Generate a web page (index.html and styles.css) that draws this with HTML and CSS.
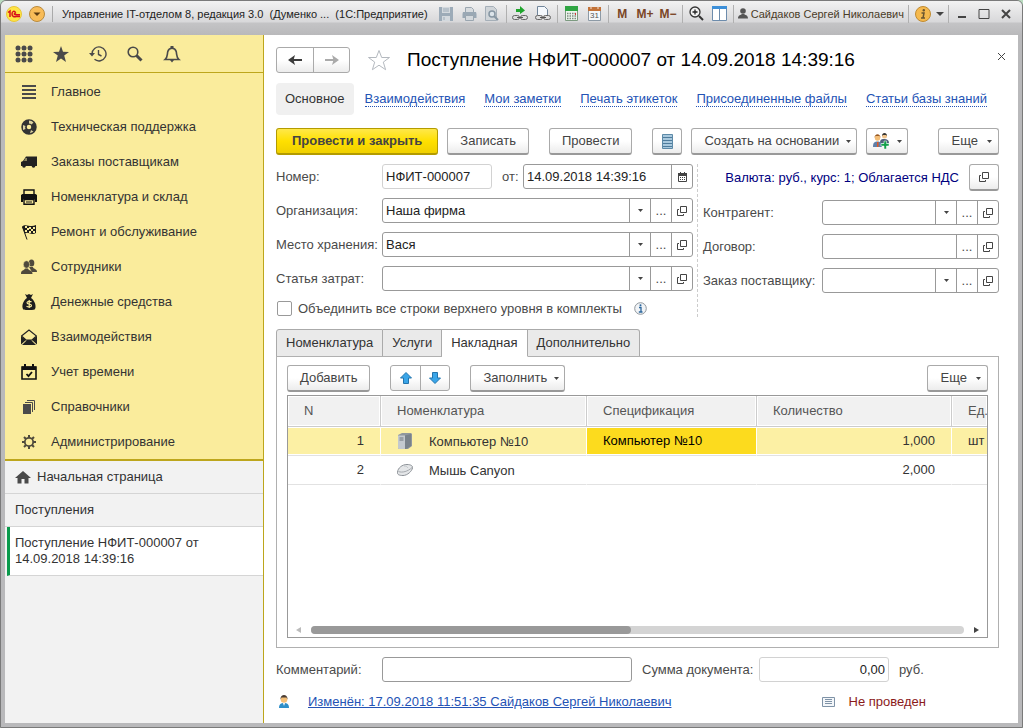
FILE: index.html
```
<!DOCTYPE html>
<html lang="ru">
<head>
    <meta charset="UTF-8">
    <meta name="viewport" content="width=device-width, initial-scale=1.0">
    <title>Поступление НФИТ-000007 от 14.09.2018 14:39:16</title>
    <link rel="stylesheet" href="styles.css">
</head>
<body>
<svg class="sprite" aria-hidden="true">
    <symbol id="i-caret" viewBox="0 0 5 3"><path d="M0 0h5L2.5 3z" fill="#444"/></symbol>
    <symbol id="i-open" viewBox="0 0 10 10"><path d="M3.500.5h6v6h-6zM2 3.500H.5v6h6V8" fill="none" stroke="#444"/></symbol>
</svg>
<div class="window">
    <header class="titlebar">
        <svg class="logo" width="16" height="16" viewBox="0 0 16 16"><circle cx="8" cy="8" r="7.500" fill="#ffe544" stroke="#e8c63a"/><path d="M2 6.500L4 5v6M9.500 6.500C8.500 4.500 6 5 6 8s2.500 3 4 2.500h4M10 7.500c-1-1-2 0-1.500 1 .5.5 1 .2 5.500.2" fill="none" stroke="#d8121c" stroke-width="1.500"/></svg>
        <button class="round" type="button" aria-label="Меню"><svg width="16" height="16" viewBox="0 0 16 16"><circle cx="8" cy="8" r="7.500" fill="#f8bc58" stroke="#b98a3c"/><path d="M4.500 6.500h7L8 10z" fill="#5b3b12"/></svg></button>
        <div class="caption"><span>Управление IT-отделом 8, редакция 3.0&nbsp; (Думенко ...&nbsp; (1С:Предприятие)</span></div>
        <div class="tools">
            <button type="button" aria-label="Сохранить"><svg width="14" height="14" viewBox="0 0 14 14"><path d="M0 0h14v14H0z" fill="#9cabb8"/><path d="M3 0h8v6H3zM3 9h8v5H3z" fill="#d3d9de"/><path d="M4 2h6M4 4h6M5 10v3" stroke="#9cabb8"/></svg></button>
            <button type="button" aria-label="Печать"><svg width="15" height="14" viewBox="0 0 15 14"><path d="M3.500 5V.5h6l2 2V5" fill="#d8dcdf" stroke="#9aa6b0"/><path d="M1 5h13l.5 2v4H.5V7z" fill="#9aa8b4"/><path d="M3.500 8.500h8v5h-8z" fill="#d3d8dc" stroke="#9aa6b0"/></svg></button>
            <button type="button" aria-label="Просмотр"><svg width="14" height="15" viewBox="0 0 14 15"><path d="M.5.5h8l3 3v11H.5z" fill="#d0d5d9" stroke="#a5afb8"/><circle cx="7" cy="8" r="3" fill="#dce4ea" stroke="#8696a3" stroke-width="1.500"/><path d="M9 10l4 4" stroke="#8696a3" stroke-width="2"/></svg></button>
        </div>
        <div class="tools">
            <button type="button" aria-label="Перейти по ссылке"><svg width="16" height="15" viewBox="0 0 16 15"><path d="M4 3h4V0l5 4.500L8 8V6H4z" fill="#1fa52c"/><rect x=".5" y="9.500" width="7" height="4" rx="2" fill="#ddd" stroke="#666"/><rect x="8.500" y="9.500" width="7" height="4" rx="2" fill="#ddd" stroke="#666"/><path d="M5 11.500h6" stroke="#555"/></svg></button>
            <button type="button" aria-label="Получить ссылку"><svg width="16" height="15" viewBox="0 0 16 15"><path d="M2.500 9V.5h7l3 3V9" fill="#f4f8fc" stroke="#71869b"/><rect x=".5" y="9.500" width="7" height="4" rx="2" fill="#ddd" stroke="#666"/><rect x="8.500" y="9.500" width="7" height="4" rx="2" fill="#ddd" stroke="#666"/><path d="M5 11.500h6" stroke="#555"/></svg></button>
        </div>
        <div class="tools">
            <button type="button" aria-label="Калькулятор"><svg width="13" height="15" viewBox="0 0 13 15"><path d="M.5.5h12v14H.5z" fill="#eef6ee" stroke="#7c9a80"/><path d="M0 0h13v5H0z" fill="#2fa543"/><path d="M2 7.500h9M2 10h9M2 12.500h9" stroke="#7d8a80" stroke-width="1.500" stroke-dasharray="1.500 1"/><path d="M10.500 7v2" stroke="#d33"/></svg></button>
            <button type="button" aria-label="Календарь"><svg width="13" height="15" viewBox="0 0 13 15"><path d="M.5 1.500h12v13H.5z" fill="#f5f7f9" stroke="#8d9aa6"/><path d="M0 1h13v4H0z" fill="#c27238"/><path d="M3 0v3M10 0v3" stroke="#f6e4d5"/><text x="2" y="12" class="cal-day">31</text></svg></button>
        </div>
        <div class="tools memory">
            <button type="button">M</button>
            <button type="button">M+</button>
            <button type="button">M−</button>
        </div>
        <div class="tools">
            <button type="button" aria-label="Масштаб"><svg width="15" height="15" viewBox="0 0 15 15"><circle cx="6" cy="6" r="5" fill="#f2f2f2" stroke="#333" stroke-width="1.300"/><path d="M3.500 6h5M6 3.500v5" stroke="#222" stroke-width="1.300"/><path d="M10 10l4 4" stroke="#333" stroke-width="2"/></svg></button>
            <button type="button" aria-label="Панели"><svg width="15" height="15" viewBox="0 0 15 15"><path d="M.5.5h14v14H.5z" fill="#fff" stroke="#6d8cac"/><path d="M0 0h15v3H0z" fill="#3c8fd8"/><path d="M7.500 3v11" stroke="#6d8cac"/></svg></button>
        </div>
        <div class="tools user"><svg width="10" height="11" viewBox="0 0 10 11"><circle cx="5" cy="3" r="2.800" fill="#555"/><path d="M0 10.500C0 7 3 7 4 6h2c1 1 4 1 4 4.500z" fill="#555"/></svg><span>Сайдаков Сергей Николаевич</span></div>
        <div class="tools info">
            <button type="button" aria-label="О программе"><svg width="16" height="16" viewBox="0 0 16 16"><circle cx="8" cy="8" r="7.500" fill="#f5b94e" stroke="#c08b31"/><path d="M6.500 7H9l-1 5h2M6 12h3" fill="none" stroke="#6a5530" stroke-width="1.500"/><circle cx="8.800" cy="4.300" r="1.200" fill="#6a5530"/></svg></button>
            <svg width="8" height="4" viewBox="0 0 8 4"><path d="M0 0h8L4 4z" fill="#444"/></svg>
        </div>
        <div class="winbtns">
            <button type="button" aria-label="Свернуть"><svg width="12" height="10" viewBox="0 0 12 10"><path d="M2 8h8" stroke="#444" stroke-width="2"/></svg></button>
            <button type="button" aria-label="Развернуть"><svg width="12" height="10" viewBox="0 0 12 10"><path d="M1 .5h10v9H1z" fill="none" stroke="#444"/></svg></button>
            <button type="button" aria-label="Закрыть"><svg width="12" height="10" viewBox="0 0 12 10"><path d="M2 1l8 8M10 1L2 9" stroke="#444" stroke-width="2"/></svg></button>
        </div>
    </header>

    <div class="workspace">
        <aside class="sidebar">
            <div class="quick">
                <button type="button" aria-label="Разделы"><svg width="18" height="18" viewBox="0 0 18 18" fill="#4a4a4a"><circle cx="3" cy="3" r="2.500"/><circle cx="9" cy="3" r="2.500"/><circle cx="15" cy="3" r="2.500"/><circle cx="3" cy="9" r="2.500"/><circle cx="9" cy="9" r="2.500"/><circle cx="15" cy="9" r="2.500"/><circle cx="3" cy="15" r="2.500"/><circle cx="9" cy="15" r="2.500"/><circle cx="15" cy="15" r="2.500"/></svg></button>
                <button type="button" aria-label="Избранное"><svg width="18" height="18" viewBox="0 0 18 18"><path d="M9 1l2 5.800 6 .2-4.800 3.600L14 17l-5-3.600L4 17l1.800-6.400L1 7l6-.2z" fill="#4a4a4a"/></svg></button>
                <button type="button" aria-label="История"><svg width="18" height="18" viewBox="0 0 18 18" fill="none" stroke="#4a4a4a" stroke-width="1.400"><path d="M3 9a7 7 0 1 1 2.500 5.300M9.500 5v4.500l3 1.500"/><path d="M0 8h6L3 11.500z" fill="#4a4a4a" stroke="none"/></svg></button>
                <button type="button" aria-label="Поиск"><svg width="18" height="18" viewBox="0 0 18 18" fill="none" stroke="#4a4a4a"><circle cx="7" cy="7" r="4.800" stroke-width="1.600"/><path d="M10.500 10.500l5 5" stroke-width="3"/></svg></button>
                <button type="button" aria-label="Оповещения"><svg width="18" height="18" viewBox="0 0 18 18"><path d="M2 14.500h14c-3-2.500-2-5-2.800-8C12.700 4.500 11 3.300 9 3.300s-3.700 1.200-4.200 3.200C4 9.500 5 12 2 14.500z" fill="none" stroke="#4a4a4a" stroke-width="1.600"/><path d="M7.500 1h3v2h-3zM7 15h4l-2 2.500z" fill="#4a4a4a"/></svg></button>
            </div>
            <nav class="sections">
                <a href="#"><svg viewBox="0 0 16 16"><path d="M1 2h14M1 6h14M1 10h14M1 14h14" stroke="#4a4a4a" stroke-width="2"/></svg>Главное</a>
                <a href="#"><svg viewBox="0 0 16 16"><circle cx="8" cy="8" r="5" fill="none" stroke="#333" stroke-width="5.500"/><path d="M8 1.500a6.500 6.500 0 0 1 4.500 2L10.500 5.500A4 4 0 0 0 8 4.500zM2 6l2.500 1a3 3 0 0 0 0 3L2 11zM10 11l2.500 1.800L9 14.300z" fill="#ddd3a0"/></svg>Техническая поддержка</a>
                <a href="#"><svg viewBox="0 0 16 16" fill="#222"><path d="M5 2.500h11v9.500H0V8l2-1z"/><path d="M4.500 4L3 7h3V4z" fill="#8b8560"/><circle cx="3" cy="12" r="1.800"/><circle cx="12.500" cy="12" r="1.800"/></svg>Заказы поставщикам</a>
                <a href="#"><svg viewBox="0 0 16 16"><path d="M3 5V1h10v4" fill="#faec9c" stroke="#111" stroke-width="1.400"/><path d="M0 6l1.500-1h13L16 6v7h-2v-2.500H2V13H0z" fill="#111"/><path d="M3 10.500h10v4.800H3z" fill="#faec9c" stroke="#111" stroke-width="1.400"/><path d="M5 13h6" stroke="#111"/></svg>Номенклатура и склад</a>
                <a href="#"><svg viewBox="0 0 16 16"><path d="M1 2.500C5-1 9 4 15 1v8C10 12 7 7 4 9.500z" fill="#1b1b1b"/><path d="M4 2h2v2H4zM8 3h2v2H8zM12 3h2v2h-2zM6 4h2v2H6zM10 5h2v2h-2zM4 6h2v2H4zM8 7h2v2H8zM12 7h2v2h-2z" fill="#faec9c"/><path d="M1.500 3L6 15.500" stroke="#1b1b1b"/></svg>Ремонт и обслуживание</a>
                <a href="#"><svg viewBox="0 0 16 16" fill="#4f4a3c"><ellipse cx="10.500" cy="4" rx="2.800" ry="3.500"/><path d="M8 8h4c0 2 4 1.500 4 5h-5z"/><ellipse cx="5.500" cy="5.500" rx="3.200" ry="3.800" stroke="#faec9c" stroke-width=".6"/><path d="M0 15c0-4.500 3-3 4-5.500h3c.5 2.500 4.500 1 4.500 5.500z"/></svg>Сотрудники</a>
                <a href="#"><svg viewBox="0 0 16 16"><path d="M4 0l2 1 2-1 2 1 2-1-2 4c3 2 5 6 4.500 9.500C14 16 13 16 8 16s-6 0-6.500-2.500C1 10 3 6 6 4z" fill="#1e1e1e"/><path d="M10.500 8c-1-1-4.500-1-4.500.8 0 2 4.500.8 4.500 2.800 0 1.800-3.500 1.800-5 .5M8.200 6v8" fill="none" stroke="#faec9c" stroke-width="1.200"/></svg>Денежные средства</a>
                <a href="#"><svg viewBox="0 0 16 16"><path d="M.5 7L8 1l7.500 6L11 11H5z" fill="#faec9c" stroke="#222" stroke-width="1.200"/><path d="M0 7l5 4-5 4.500zM16 7l-5 4 5 4.500zM1 16l5-5h4l5 5z" fill="#222"/></svg>Взаимодействия</a>
                <a href="#"><svg viewBox="0 0 16 16"><path d="M1 3h14v12H1z" fill="#faec9c" stroke="#111" stroke-width="1.600"/><path d="M1 2.500h14V6H1z" fill="#111"/><path d="M4 0v3M12 0v3" stroke="#111" stroke-width="2"/><path d="M5.500 10l2 2.200L11 8" fill="none" stroke="#111" stroke-width="1.800"/></svg>Учет времени</a>
                <a href="#"><svg viewBox="0 0 16 16"><path d="M2 5h8v10H2z" fill="#4a4a4a"/><path d="M4 3.500h7.500V13M6 1.500h7.500V11" fill="none" stroke="#4a4a4a"/></svg>Справочники</a>
                <a href="#"><svg viewBox="0 0 16 16" fill="none" stroke="#4f4a3c"><circle cx="8" cy="8" r="4.200" stroke-width="1.800"/><path d="M8 1v3M8 12v3M1 8h3M12 8h3M3 3l2 2M11 11l2 2M3 13l2-2M11 5l2-2" stroke-width="2"/></svg>Администрирование</a>
            </nav>
            <nav class="opened">
                <a href="#"><svg width="16" height="14" viewBox="0 0 16 14"><path d="M8 1l8 7h-2.500v5.500h-4V9h-3v4.500h-4V8H0z" fill="#4a4a4a"/></svg>Начальная страница</a>
                <a href="#">Поступления</a>
                <a href="#" class="current">Поступление НФИТ-000007 от 14.09.2018 14:39:16</a>
            </nav>
        </aside>

        <main class="document">
            <div class="head">
                <div class="pair history">
                    <button type="button" aria-label="Назад"><svg width="14" height="10" viewBox="0 0 14 10"><path d="M14 5H4" stroke="#3c3c3c" stroke-width="2"/><path d="M0 5l7-5-1.500 5L7 10z" fill="#3c3c3c"/></svg></button>
                    <button type="button" aria-label="Вперед"><svg width="14" height="10" viewBox="0 0 14 10"><path d="M0 5h10" stroke="#aaa" stroke-width="2"/><path d="M14 5L7 0l1.500 5L7 10z" fill="#aaa"/></svg></button>
                </div>
                <svg class="fav" width="24" height="22" viewBox="0 0 24 22"><path d="M12 1.500l2.700 7h7.800l-6.200 4.600 2.300 7.600L12 16.200l-6.600 4.500 2.300-7.600L1.500 8.500h7.800z" fill="#fff" stroke="#b4b9bf"/></svg>
                <h1>Поступление НФИТ-000007 от 14.09.2018 14:39:16</h1>
                <button class="close" type="button" aria-label="Закрыть"><svg width="9" height="9" viewBox="0 0 9 9"><path d="M1 1l7 7M8 1L1 8" stroke="#444"/></svg></button>
            </div>

            <nav class="links">
                <a href="#" class="active">Основное</a>
                <a href="#"><span>Взаимодействия</span></a>
                <a href="#"><span>Мои заметки</span></a>
                <a href="#"><span>Печать этикеток</span></a>
                <a href="#"><span>Присоединенные файлы</span></a>
                <a href="#"><span>Статьи базы знаний</span></a>
            </nav>

            <div class="commands">
                <button class="btn primary" type="button">Провести и закрыть</button>
                <button class="btn" type="button">Записать</button>
                <button class="btn spaced" type="button">Провести</button>
                <button class="btn square spaced" type="button" aria-label="Движения документа"><svg width="11" height="15" viewBox="0 0 11 15"><path d="M.5.5h10v14H.5z" fill="#a9c9de" stroke="#5d8aa8"/><path d="M1 3.500h9M1 6.500h9M1 9.500h9M1 12.500h9" stroke="#4f7c9c"/></svg></button>
                <button class="btn" type="button">Создать на основании<svg class="caret"><use href="#i-caret"/></svg></button>
                <button class="btn people" type="button" aria-label="Добавить участника"><svg width="17" height="16" viewBox="0 0 17 16"><circle cx="11.500" cy="3" r="2.500" fill="#f0c48c"/><path d="M9 3c0-4 5-4 5 0l-1-1h-3z" fill="#333"/><path d="M7 10c0-4 2-4 4.500-4S16 7 16 10z" fill="#50617a"/><circle cx="4.500" cy="5" r="2.700" fill="#f3bd77"/><path d="M1.500 5c0-5 6-5 6 0l-1-2h-4z" fill="#9a5a22"/><path d="M0 14c0-5 2-5.500 4.500-5.500S9 9 9 14z" fill="#5f7fa8"/><path d="M4 9h1.500v5H4z" fill="#e25822"/><path d="M11 8h2.500v2.500H16V13h-2.500v3H11v-3H8v-2.500h3z" fill="#13a04a" stroke="#fff" stroke-width=".5"/></svg><svg class="caret"><use href="#i-caret"/></svg></button>
                <button class="btn more" type="button">Еще<svg class="caret"><use href="#i-caret"/></svg></button>
            </div>

            <form class="form">
                <div class="col">
                    <div class="row">
                        <label for="number">Номер:</label>
                        <div class="field light number"><input type="text" id="number" value="НФИТ-000007"></div>
                        <label class="from" for="date">от:</label>
                        <div class="field"><input type="text" id="date" value="14.09.2018 14:39:16"><button type="button" aria-label="Выбрать дату"><svg width="9" height="10" viewBox="0 0 9 10"><path d="M.5 1.500h8v8h-8z" fill="#fff" stroke="#444"/><path d="M0 1h9v3H0z" fill="#444"/><path d="M2.500 0v2M6.500 0v2" stroke="#444"/><path d="M2 5.500h5M2 7.500h5" stroke="#444" stroke-dasharray="1 1"/></svg></button></div>
                    </div>
                    <div class="row">
                        <label for="org">Организация:</label>
                        <div class="field"><input type="text" id="org" value="Наша фирма"><button type="button" aria-label="Список"><svg class="caret"><use href="#i-caret"/></svg></button><button type="button">...</button><button type="button" aria-label="Открыть"><svg class="open"><use href="#i-open"/></svg></button></div>
                    </div>
                    <div class="row">
                        <label for="place">Место хранения:</label>
                        <div class="field"><input type="text" id="place" value="Вася"><button type="button" aria-label="Список"><svg class="caret"><use href="#i-caret"/></svg></button><button type="button">...</button><button type="button" aria-label="Открыть"><svg class="open"><use href="#i-open"/></svg></button></div>
                    </div>
                    <div class="row">
                        <label for="cost">Статья затрат:</label>
                        <div class="field"><input type="text" id="cost"><button type="button" aria-label="Список"><svg class="caret"><use href="#i-caret"/></svg></button><button type="button">...</button><button type="button" aria-label="Открыть"><svg class="open"><use href="#i-open"/></svg></button></div>
                    </div>
                    <div class="check">
                        <input type="checkbox" id="merge">
                        <label for="merge">Объединить все строки верхнего уровня в комплекты</label>
                        <svg width="13" height="13" viewBox="0 0 13 13"><circle cx="6.500" cy="6.500" r="5.800" fill="#f1f4f7" stroke="#8f969c"/><path d="M5 5.500h2V10M4.800 10h3.700" fill="none" stroke="#2a659c" stroke-width="1.300"/><circle cx="6.500" cy="3.300" r="1" fill="#2a659c"/></svg>
                    </div>
                </div>
                <div class="col right">
                    <div class="currency">
                        <a href="#">Валюта: руб., курс: 1; Облагается НДС</a>
                        <button class="btn square" type="button" aria-label="Открыть"><svg class="open"><use href="#i-open"/></svg></button>
                    </div>
                    <div class="row">
                        <label for="partner">Контрагент:</label>
                        <div class="field"><input type="text" id="partner"><button type="button" aria-label="Список"><svg class="caret"><use href="#i-caret"/></svg></button><button type="button">...</button><button type="button" aria-label="Открыть"><svg class="open"><use href="#i-open"/></svg></button></div>
                    </div>
                    <div class="row">
                        <label for="contract">Договор:</label>
                        <div class="field"><input type="text" id="contract"><button type="button">...</button><button type="button" aria-label="Открыть"><svg class="open"><use href="#i-open"/></svg></button></div>
                    </div>
                    <div class="row">
                        <label for="order">Заказ поставщику:</label>
                        <div class="field"><input type="text" id="order"><button type="button" aria-label="Список"><svg class="caret"><use href="#i-caret"/></svg></button><button type="button">...</button><button type="button" aria-label="Открыть"><svg class="open"><use href="#i-open"/></svg></button></div>
                    </div>
                </div>
            </form>

            <div class="tabs">
                <button type="button">Номенклатура</button>
                <button type="button">Услуги</button>
                <button type="button" class="active">Накладная</button>
                <button type="button">Дополнительно</button>
            </div>
            <section class="panel">
                <div class="commands">
                    <button class="btn" type="button">Добавить</button>
                    <div class="pair spaced">
                        <button type="button" aria-label="Вверх"><svg width="12" height="12" viewBox="0 0 12 12"><path d="M6 .5L11.500 6H8.500v5.500h-5V6H.5z" fill="#3aa5e8" stroke="#2374ad"/></svg></button>
                        <button type="button" aria-label="Вниз"><svg width="12" height="12" viewBox="0 0 12 12"><path d="M6 11.500L.5 6h3V.5h5V6h3z" fill="#3aa5e8" stroke="#2374ad"/></svg></button>
                    </div>
                    <button class="btn spaced" type="button">Заполнить<svg class="caret"><use href="#i-caret"/></svg></button>
                    <button class="btn more" type="button">Еще<svg class="caret"><use href="#i-caret"/></svg></button>
                </div>
                <div class="grid">
                    <div class="rows">
                        <table>
                            <colgroup><col class="c-num"><col class="c-item"><col class="c-spec"><col class="c-qty"><col class="c-unit"></colgroup>
                            <thead>
                            <tr><th>N</th><th>Номенклатура</th><th>Спецификация</th><th>Количество</th><th>Ед.</th></tr>
                            </thead>
                            <tbody>
                            <tr class="selected">
                                <td class="num">1</td>
                                <td><svg width="16" height="16" viewBox="0 0 16 16"><path d="M1 2l4-2h9l1 1v12l-4 3H2l-1-1z" fill="#8f979e"/><path d="M1 2.500h7V16H2l-1-1z" fill="#c3c9ce"/><path d="M8 2.500L14 1v12l-5 3H8z" fill="#79828a"/><path d="M2.500 5h4M2.500 7h4" stroke="#6e777f"/></svg>Компьютер №10</td>
                                <td class="cell">Компьютер №10</td>
                                <td class="num">1,000</td>
                                <td>шт</td>
                            </tr>
                            <tr>
                                <td class="num">2</td>
                                <td><svg width="16" height="16" viewBox="0 0 16 16"><path d="M.5 10C1 6 5 2.500 10 2.500c4 0 6 1.500 5.500 3.500-.5 3-5 7.500-9.500 7.500-4 0-6-1-5.500-3.500z" fill="#e4e6e8" stroke="#8d9298"/><path d="M1.500 9.500C5 11 11 9.500 15 5.500" fill="none" stroke="#a5a9ae"/><path d="M7 4c2 0 3 .5 4 2" fill="none" stroke="#c0c4c8"/></svg>Мышь Canyon</td>
                                <td></td>
                                <td class="num">2,000</td>
                                <td></td>
                            </tr>
                            </tbody>
                        </table>
                    </div>
                    <div class="scroll">
                        <svg width="5" height="6" viewBox="0 0 5 6"><path d="M5 0v6L0 3z" fill="#bbb"/></svg>
                        <div class="track"><div class="thumb"></div></div>
                        <svg width="5" height="6" viewBox="0 0 5 6"><path d="M0 0v6l5-3z" fill="#444"/></svg>
                    </div>
                </div>
            </section>

            <div class="row footer">
                <label for="comment">Комментарий:</label>
                <div class="field comment"><input type="text" id="comment"></div>
                <label class="sum-label" for="sum">Сумма документа:</label>
                <div class="field light sum"><input type="text" id="sum" value="0,00"></div>
                <span>руб.</span>
            </div>
            <div class="status">
                <svg width="16" height="14" viewBox="0 0 16 14"><circle cx="8" cy="4.500" r="3.300" fill="#f5c078"/><path d="M4.500 4.500c-.5-6 7.500-6 7 0L10.500 2.500h-5z" fill="#4a3c33"/><path d="M3 13c0-4 2-5 5-5s5 1 5 5z" fill="#2f8fc9"/><path d="M7 8h2l-1 3z" fill="#fff"/></svg>
                <a href="#">Изменён: 17.09.2018 11:51:35 Сайдаков Сергей Николаевич</a>
                <div class="state"><svg width="13" height="10" viewBox="0 0 13 10"><path d="M.5.5h12v9H.5z" fill="#f4f7fa" stroke="#7f93a7"/><path d="M3 2.500h7M3 4.500h7M3 6.500h7" stroke="#7f93a7"/></svg>Не проведен</div>
            </div>
        </main>
    </div>
</div>
</body>
</html>
```
FILE: styles.css
```
* {
    box-sizing: border-box;
}

body {
    margin: 0;
    font-family: "Liberation Sans", Arial, sans-serif;
    font-size: 13px;
    line-height: 16px;
    color: #333;
    background-color: #b9dcc0;
}

button,
input {
    font: inherit;
    color: inherit;
    margin: 0;
}

button {
    display: flex;
    align-items: center;
    justify-content: center;
    padding: 0;
    border: none;
    background: none;
    white-space: nowrap;
    cursor: pointer;
}

a {
    color: inherit;
    text-decoration: none;
}

svg {
    flex: none;
}

.sprite {
    display: none;
}

.caret {
    width: 5px;
    height: 3px;
}

.open {
    width: 10px;
    height: 10px;
}

.window {
    display: flex;
    flex-direction: column;
    min-height: 100vh;
    padding: 0 4px 4px;
    border: 1px solid #7a7a7a;
    border-radius: 6px 6px 0 0;
    background-color: #b9b9bb;
}

/* заголовок окна */
.titlebar {
    display: flex;
    align-items: center;
    height: 34px;
    margin: 0 -4px;
    padding: 0 5px 9px;
    border-radius: 5px 5px 0 0;
    background: linear-gradient(#f2f2f2, #d8d8da 21px, #c4c4c6 22px, #b9b9bb);
    font-size: 11px;
    color: #222;
}

.round {
    margin: 0 7px;
}

.caption {
    flex: 1;
    min-width: 0;
    padding-left: 9px;
    border-left: 1px solid #aaa;
    overflow: hidden;
    white-space: nowrap;
}

.tools {
    display: flex;
    align-items: center;
    height: 18px;
    padding: 0 2px;
    border-right: 1px solid #b0b0b0;
}

.tools button {
    width: 23px;
}

.cal-day {
    font-size: 8px;
    fill: #555;
}

.memory {
    font-size: 12px;
    font-weight: bold;
    color: #7a4526;
}

.user {
    gap: 3px;
    padding: 0 4px;
    color: #4a3c28;
}

.info {
    gap: 2px;
    padding-right: 4px;
}

.winbtns {
    display: flex;
    padding-left: 2px;
}

.winbtns button {
    width: 22px;
}

.workspace {
    display: flex;
    flex: 1;
}

/* панель разделов */
.sidebar {
    display: flex;
    flex-direction: column;
    width: 259px;
    border-right: 1px solid #bda61c;
    background-color: #f2f2f2;
}

.quick {
    display: flex;
    gap: 19px;
    padding: 10px 10px 9px;
    border-bottom: 1px solid #bda61c;
    background-color: #faec9c;
}

.sections {
    padding: 1px 0 0;
    border-bottom: 2px solid #bda61c;
    background-color: #faec9c;
}

.sections a {
    display: flex;
    align-items: center;
    gap: 14px;
    height: 35px;
    padding-left: 16px;
}

.sections svg {
    width: 16px;
    height: 16px;
}

.opened a {
    display: flex;
    align-items: center;
    gap: 6px;
    padding: 8px 60px 8px 10px;
    border-bottom: 1px solid #d5d5d5;
}

.opened .current {
    margin-left: 2px;
    padding-left: 5px;
    border-left: 3px solid #0a9a4c;
    background-color: #fff;
}

/* документ */
.document {
    display: flex;
    flex: 1;
    flex-direction: column;
    min-width: 0;
    padding: 12px 19px 11px 12px;
    background-color: #fff;
}

.head {
    display: flex;
    align-items: center;
    height: 25px;
}

.head h1 {
    margin: 0 auto 0 16px;
    font-size: 19px;
    line-height: 24px;
    font-weight: normal;
    color: #000;
    white-space: nowrap;
}

.fav {
    margin-left: 17px;
}

.close {
    width: 17px;
    height: 17px;
    margin: 0 -11px 6px 0;
}

.pair {
    display: flex;
    height: 26px;
    border: 1px solid #aaa;
    border-radius: 3px;
    background: linear-gradient(#fff 50%, #ececec);
}

.pair button {
    width: 29px;
}

.pair button + button {
    border-left: 1px solid #aaa;
}

.history button {
    width: 36px;
}

.links {
    display: flex;
    align-items: center;
    gap: 19px;
    height: 32px;
    margin-top: 11px;
    color: #2453b5;
    white-space: nowrap;
}

.links span {
    border-bottom: 1px dotted #2453b5;
}

.links .active {
    margin-right: -8px;
    padding: 8px 9px;
    border-radius: 4px;
    background-color: #f0f0f0;
    color: #333;
}

.commands {
    display: flex;
    gap: 9px;
    margin-top: 13px;
}

.btn {
    gap: 7px;
    height: 27px;
    padding: 0 12px;
    border: 1px solid #aaa;
    border-bottom: 2px solid #999;
    border-radius: 3px;
    background: linear-gradient(#fff 50%, #ececec);
    color: #444;
}

.primary {
    padding: 0 15px;
    border-color: #b39b00;
    background: linear-gradient(#ffe84a, #ffe000 50%, #f0d000);
    font-weight: bold;
}

.btn .caret {
    margin-right: -7px;
}

.spaced {
    margin-left: 11px;
}

.square {
    width: 30px;
    padding: 0;
}

.people {
    padding: 0 12px 0 6px;
}

.more {
    gap: 9px;
    margin-left: auto;
    padding: 0 13px;
}

.form {
    display: grid;
    grid-template-columns: 1fr 302px;
    margin-top: 9px;
}

.col {
    display: flex;
    flex-direction: column;
    gap: 9px;
    min-width: 0;
    padding-right: 4px;
}

.right {
    padding: 0 0 0 5px;
    border-left: 1px dashed #ccc;
}

.row {
    display: flex;
    align-items: center;
    height: 25px;
    color: #4a4a4a;
    white-space: nowrap;
}

.row label {
    width: 106px;
}

.right label {
    width: 119px;
}

.row .from {
    width: 31px;
    padding-left: 10px;
}

.field {
    display: flex;
    flex: 1;
    height: 25px;
    min-width: 0;
    border: 1px solid #999;
    border-radius: 3px;
    background-color: #fff;
}

.field input {
    flex: 1;
    width: 0;
    min-width: 0;
    padding: 0 3px;
    border: none;
    background: none;
    color: #222;
}

.field button {
    width: 21px;
    border-left: 1px solid #999;
}

.light {
    border-color: #d2d2d2;
}

.number {
    flex: none;
    width: 110px;
}

.check {
    display: flex;
    align-items: center;
    height: 17px;
    color: #4a4a4a;
    white-space: nowrap;
}

.check input {
    appearance: none;
    width: 15px;
    height: 15px;
    margin: 0 6px 0 1px;
    border: 1px solid #999;
    border-radius: 2px;
}

.check svg {
    margin-left: 12px;
}

.currency {
    display: flex;
    align-items: center;
    justify-content: flex-end;
    gap: 10px;
    color: #000080;
    white-space: nowrap;
}

/* вкладки */
.tabs {
    display: flex;
    height: 28px;
    margin-top: 12px;
}

.tabs button {
    padding: 0 9px;
    border: 1px solid #aaa;
    border-left-width: 0;
    background-color: #eaeaea;
}

.tabs button:first-child {
    border-left-width: 1px;
    border-top-left-radius: 3px;
}

.tabs button:last-child {
    border-top-right-radius: 3px;
}

.tabs .active {
    z-index: 1;
    border-bottom-color: #fff;
    background-color: #fff;
}

.panel {
    display: flex;
    flex: 1;
    flex-direction: column;
    margin-top: -1px;
    padding: 8px 10px 9px;
    border: 1px solid #b0b0b0;
}

.panel .commands {
    margin: 0 0 3px;
}

.grid {
    display: flex;
    flex: 1;
    flex-direction: column;
    min-width: 0;
    border: 1px solid #999;
}

.rows {
    flex: 1;
    overflow: hidden;
}

table {
    width: 100%;
    table-layout: fixed;
    border-collapse: separate;
    border-spacing: 0;
}

.c-num {
    width: 93px;
}

.c-item {
    width: 206px;
}

.c-spec {
    width: 170px;
}

.c-unit {
    width: 35px;
}

th,
td {
    height: 29px;
    padding: 0 16px;
    border-right: 1px solid #fff;
    border-bottom: 1px solid #e2e2e2;
    text-align: left;
    font-weight: normal;
    white-space: nowrap;
    overflow: hidden;
}

th {
    height: 31px;
    border-right-color: #ccc;
    border-bottom-color: #ccc;
    background-color: #f1f1f1;
    box-shadow: inset 0 0 0 1px #fff;
    color: #555;
}

th:last-child,
td:last-child {
    padding-right: 0;
    border-right: none;
}

td svg {
    margin-right: 16px;
    vertical-align: -3px;
}

.num {
    text-align: right;
}

.selected td {
    background-color: #fcf0a4;
    box-shadow: inset 0 1px #fff, inset 0 -1px #fff;
}

.selected .cell {
    background-color: #fcdb1e;
    color: #000;
}

.scroll {
    display: flex;
    align-items: center;
    gap: 10px;
    height: 15px;
    padding: 0 8px;
}

.track {
    flex: 1;
    height: 8px;
    border-radius: 4px;
    background-color: #d4d4d4;
}

.thumb {
    width: 49%;
    height: 8px;
    border-radius: 4px;
    background-color: #999;
}

.footer {
    margin-top: 9px;
}

.comment {
    flex: none;
    width: 250px;
}

.footer .sum-label {
    width: 127px;
    padding-left: 10px;
}

.sum {
    flex: none;
    width: 130px;
    margin-right: 10px;
}

.sum input {
    text-align: right;
}

.status {
    display: flex;
    align-items: center;
    gap: 16px;
    height: 20px;
    margin-top: 10px;
    white-space: nowrap;
}

.status a {
    color: #2453b5;
    text-decoration: underline;
}

.state {
    display: flex;
    align-items: center;
    gap: 14px;
    margin: 0 73px 0 auto;
    color: #8b1a1a;
}
```
